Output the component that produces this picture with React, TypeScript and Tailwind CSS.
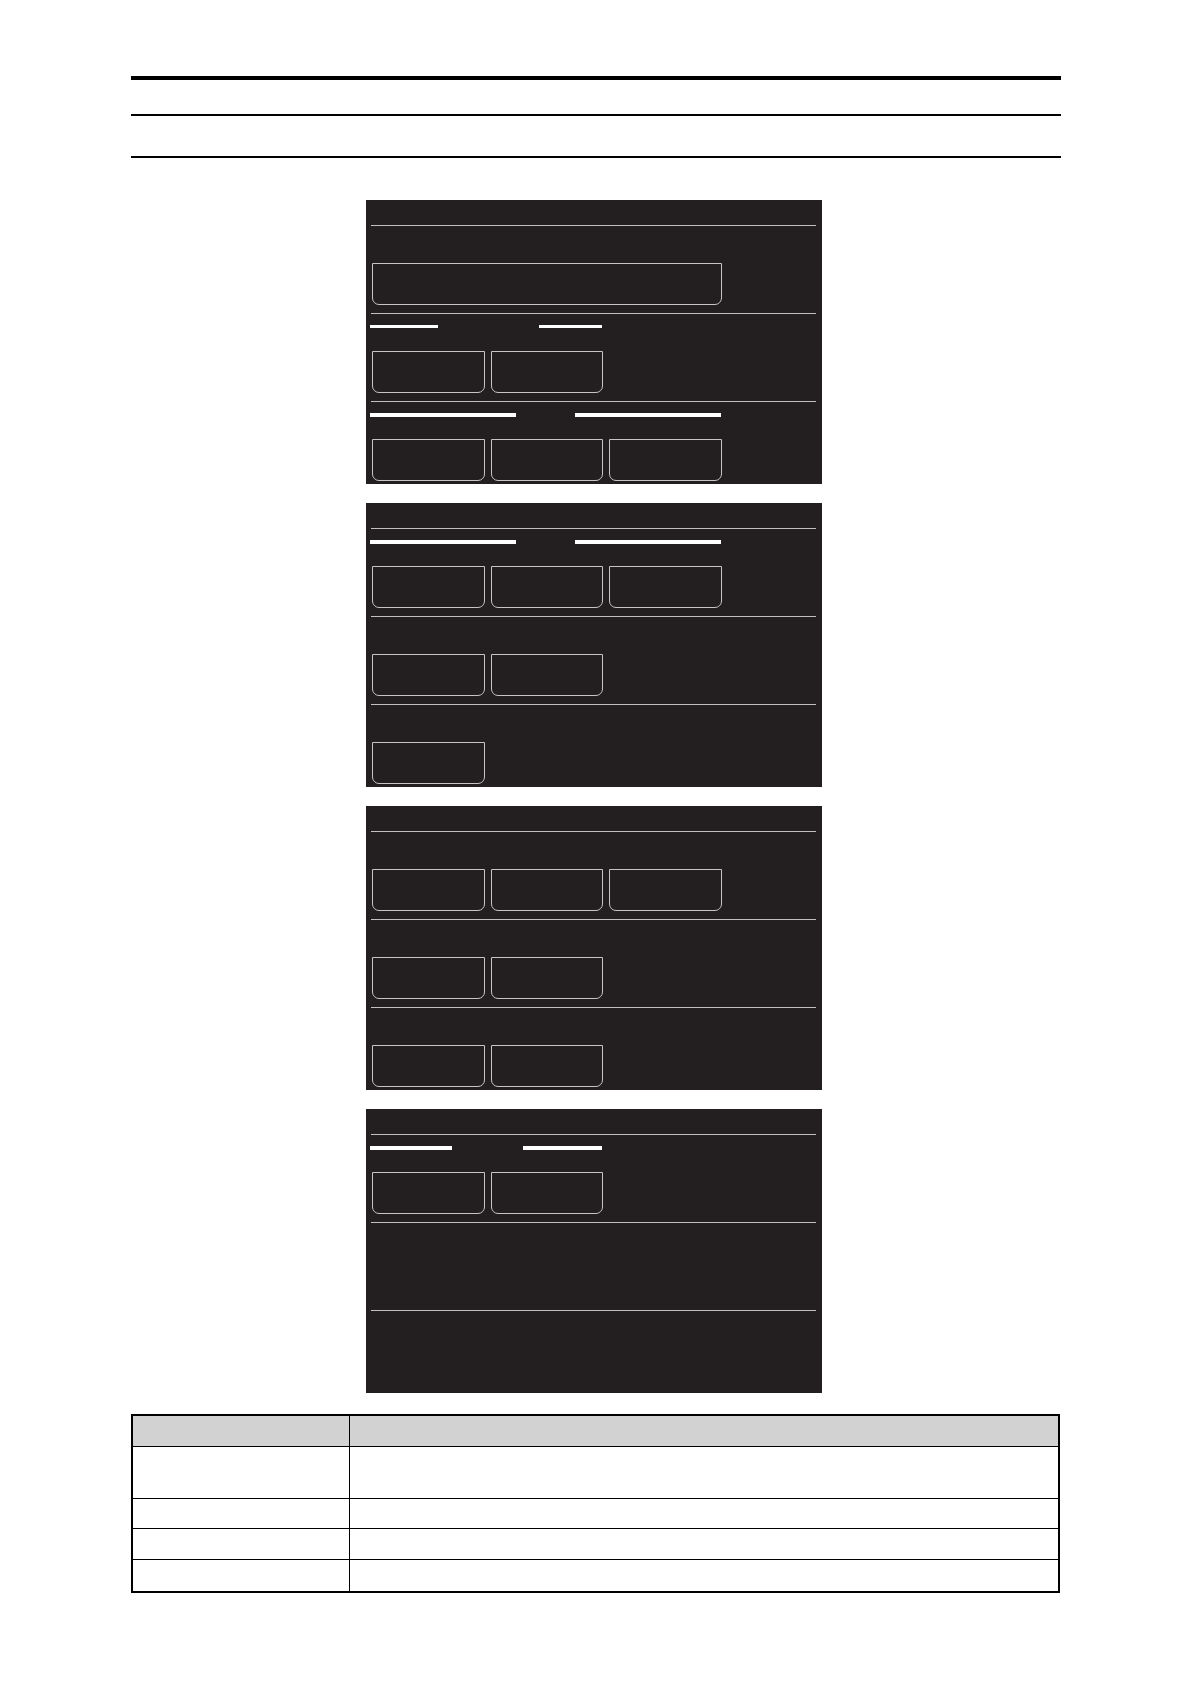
import clsx from "clsx";

type Section = {
  // width classes of the group and its left and right bars
  bars?: { group: string; left: string; right: string; height: string };
  buttons: number;
  wide?: boolean;
};

const fullBars = {
  group: "max-w-[351px]",
  left: "w-[146px]",
  right: "w-[146px]",
  height: "h-1",
};

const panels: Section[][] = [
  [
    { buttons: 1, wide: true },
    {
      buttons: 2,
      bars: {
        group: "max-w-[232px]",
        left: "w-[68px]",
        right: "w-[63px]",
        height: "h-[3px]",
      },
    },
    { buttons: 3, bars: fullBars },
  ],
  [{ buttons: 3, bars: fullBars }, { buttons: 2 }, { buttons: 1 }],
  [{ buttons: 3 }, { buttons: 2 }, { buttons: 2 }],
  [
    {
      buttons: 2,
      bars: {
        group: "max-w-[232px]",
        left: "w-[82px]",
        right: "w-[79px]",
        height: "h-1",
      },
    },
    { buttons: 0 },
    { buttons: 0 },
  ],
];

const rowHeights = ["h-[52px]", "h-[30px]", "h-[31px]", "h-[31px]"];

function PanelSection({ section }: { section: Section }) {
  const { bars, buttons, wide } = section;

  return (
    <section>
      <hr className="ml-px border-t border-[#c4bebf]" />
      <div className="h-[37px] pt-[11px]">
        {bars ? (
          <div className={clsx("flex justify-between", bars.group)}>
            <span className={clsx("bg-white", bars.height, bars.left)} />
            <span className={clsx("bg-white", bars.height, bars.right)} />
          </div>
        ) : null}
      </div>
      <div className="ml-0.5 grid min-h-[42px] max-w-[350px] grid-cols-3 gap-1.5">
        {Array.from({ length: buttons }, (_, i) => (
          <button
            key={i}
            type="button"
            aria-label={`Option ${i + 1}`}
            className={clsx(
              "h-[42px] rounded-b-[7px] border border-[#c8c3c4]",
              wide && "col-span-3",
            )}
          />
        ))}
      </div>
    </section>
  );
}

function Panel({ sections }: { sections: Section[] }) {
  return (
    <article className="flex w-full max-w-[456px] flex-col gap-2 bg-[#231f20] pt-[25px] pr-1.5 pb-[3px] pl-1">
      {sections.map((section, i) => (
        <PanelSection key={i} section={section} />
      ))}
    </article>
  );
}

export default function App() {
  return (
    <main className="min-h-screen bg-white pt-[76px] pr-[130px] pb-[91px] pl-[131px] font-['Liberation_Sans',sans-serif]">
      <header className="flex flex-col">
        <hr className="border-t-4 border-black" />
        <hr className="mt-[34px] border-t-2 border-black" />
        <hr className="mt-10 border-t-2 border-black" />
      </header>

      <div className="mt-[42px] flex flex-col items-center gap-[19px] pr-1">
        {panels.map((sections, i) => (
          <Panel key={i} sections={sections} />
        ))}
      </div>

      <div className="mt-[21px] pr-px">
        <table className="w-full table-fixed border-separate border-spacing-0 border-2 border-black">
          <colgroup>
            <col className="w-[217px]" />
            <col />
          </colgroup>
          <thead>
            <tr className="h-[31px] bg-[#d2d2d2]">
              <th className="border-r border-b border-black p-0" />
              <th className="border-b border-black p-0" />
            </tr>
          </thead>
          <tbody>
            {rowHeights.map((height, i) => {
              const last = i === rowHeights.length - 1;
              return (
                <tr key={i} className={height}>
                  <td
                    className={clsx(
                      "border-r border-black p-0",
                      !last && "border-b",
                    )}
                  />
                  <td className={clsx("border-black p-0", !last && "border-b")} />
                </tr>
              );
            })}
          </tbody>
        </table>
      </div>
    </main>
  );
}
